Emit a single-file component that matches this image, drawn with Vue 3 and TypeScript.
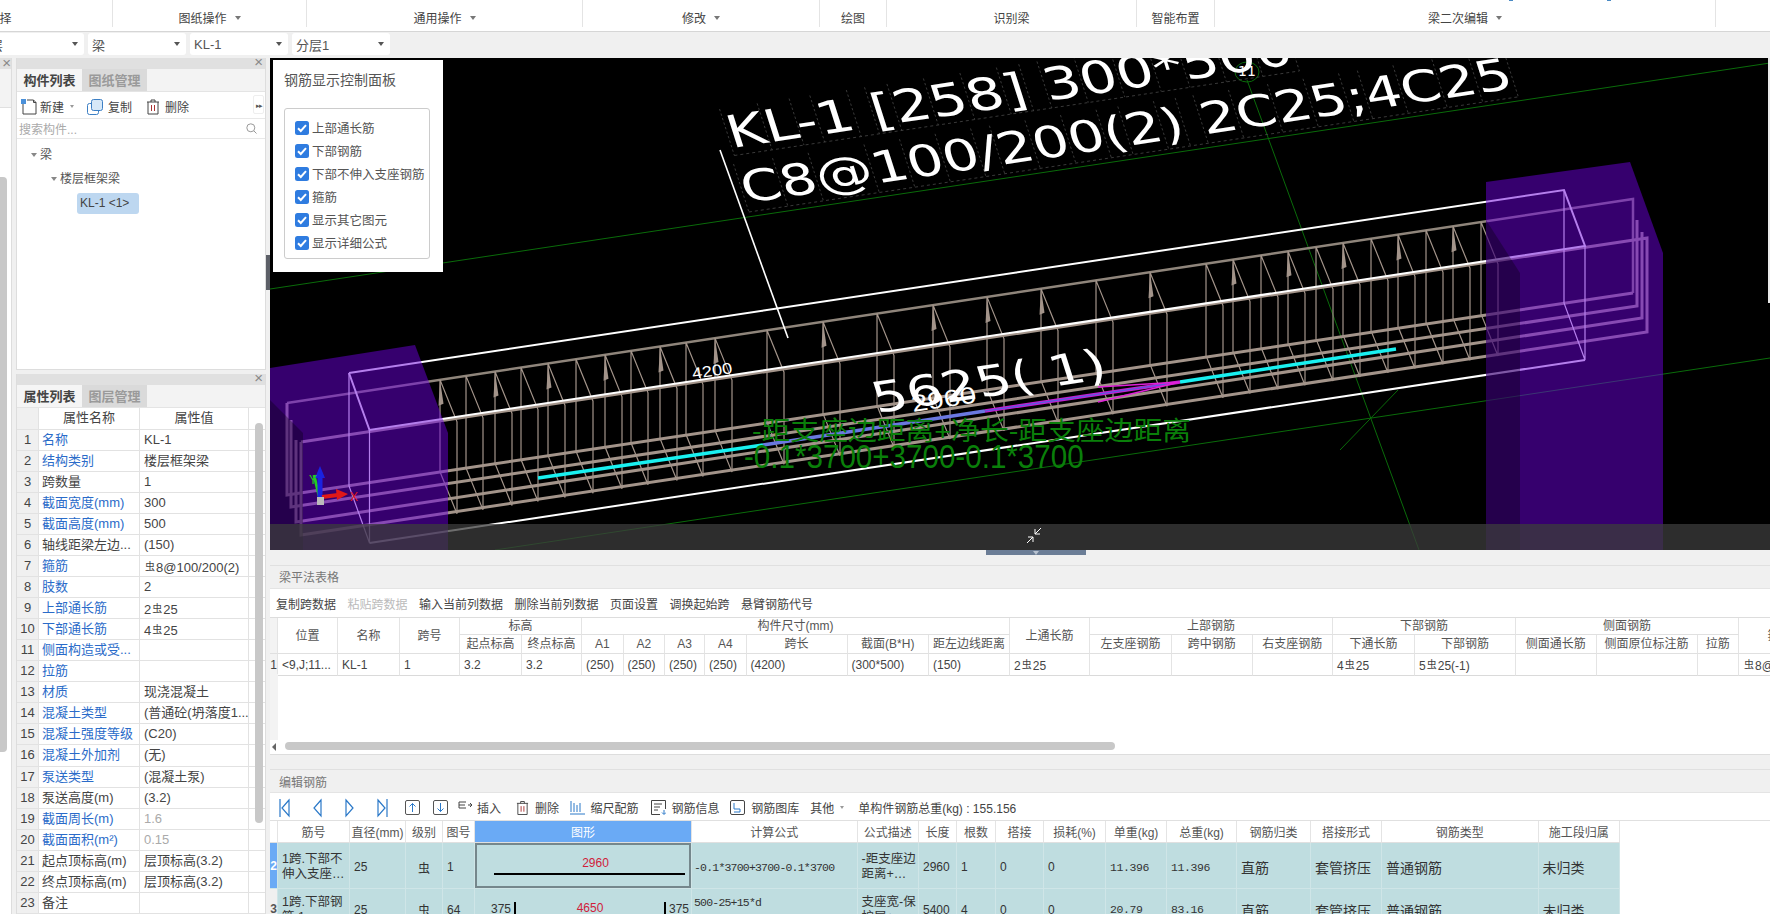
<script setup lang="ts">
const ribbon = [
  { t: '选择', w: 226, a: false, first: true },
  { t: '图纸操作', w: 194, a: true },
  { t: '通用操作', w: 276, a: true },
  { t: '修改', w: 237, a: true },
  { t: '绘图', w: 67, a: false },
  { t: '识别梁', w: 250, a: false },
  { t: '智能布置', w: 78, a: false },
  { t: '梁二次编辑', w: 501, a: true },
  { t: '', w: 54, a: false },
]
const selects = ['层', '梁', 'KL-1', '分层1']
const checks = ['上部通长筋', '下部钢筋', '下部不伸入支座钢筋', '箍筋', '显示其它图元', '显示详细公式']

interface Prop { n: string; v: string; link?: boolean; dim?: boolean; rb?: [string, string] }
const props: Prop[] = [
  { n: '名称', v: 'KL-1', link: true },
  { n: '结构类别', v: '楼层框架梁', link: true },
  { n: '跨数量', v: '1' },
  { n: '截面宽度(mm)', v: '300', link: true },
  { n: '截面高度(mm)', v: '500', link: true },
  { n: '轴线距梁左边...', v: '(150)' },
  { n: '箍筋', v: '', link: true, rb: ['', '8@100/200(2)'] },
  { n: '肢数', v: '2', link: true },
  { n: '上部通长筋', v: '', link: true, rb: ['2', '25'] },
  { n: '下部通长筋', v: '', link: true, rb: ['4', '25'] },
  { n: '侧面构造或受...', v: '', link: true },
  { n: '拉筋', v: '', link: true },
  { n: '材质', v: '现浇混凝土', link: true },
  { n: '混凝土类型', v: '(普通砼(坍落度1...', link: true },
  { n: '混凝土强度等级', v: '(C20)', link: true },
  { n: '混凝土外加剂', v: '(无)', link: true },
  { n: '泵送类型', v: '(混凝土泵)', link: true },
  { n: '泵送高度(m)', v: '(3.2)' },
  { n: '截面周长(m)', v: '1.6', link: true, dim: true },
  { n: '截面面积(m²)', v: '0.15', link: true, dim: true },
  { n: '起点顶标高(m)', v: '层顶标高(3.2)' },
  { n: '终点顶标高(m)', v: '层顶标高(3.2)' },
  { n: '备注', v: '' },
]

const t1Cols = [8, 60, 62, 60, 62, 60, 41.5, 41.5, 40, 41.5, 101, 81.5, 81, 80, 82, 80.5, 80.5, 82, 101, 80.5, 101, 41.5, 82]
const t1Sub = ['起点标高', '终点标高', 'A1', 'A2', 'A3', 'A4', '跨长', '截面(B*H)', '距左边线距离']
const t1Sub2 = ['左支座钢筋', '跨中钢筋', '右支座钢筋', '下通长筋', '下部钢筋', '侧面通长筋', '侧面原位标注筋', '拉筋']
const t1Data = ['<9,J;11...', 'KL-1', '1', '3.2', '3.2', '(250)', '(250)', '(250)', '(250)', '(4200)', '(300*500)', '(150)']
const t1Tools = [
  { t: '复制跨数据' }, { t: '粘贴跨数据', off: true }, { t: '输入当前列数据' }, { t: '删除当前列数据' },
  { t: '页面设置' }, { t: '调换起始跨' }, { t: '悬臂钢筋代号' },
]
const t2Cols = [8, 72, 56, 37, 32, 217, 165.5, 61.5, 38, 39, 48, 62, 61, 70, 74, 71, 156.5, 81.5]
const t2Head = ['', '筋号', '直径(mm)', '级别', '图号', '图形', '计算公式', '公式描述', '长度', '根数', '搭接', '损耗(%)', '单重(kg)', '总重(kg)', '钢筋归类', '搭接形式', '钢筋类型', '施工段归属']

// ---- 3D beam drawing ----
const topY = (x: number) => 403 - 0.1516 * (x - 287)
const stirrupXs: [number, boolean][] = [
  [440, true], [466, false], [495, true], [521, false], [548, true], [576, false], [605, true], [631, false],
  [660, true], [686, false], [715, true], [767, false], [823, true], [877, false], [933, true], [987, true],
  [1041, true], [1096, false], [1150, true], [1206, false], [1233, true], [1261, false], [1288, true],
  [1316, false], [1343, true], [1371, false], [1398, true], [1426, false], [1453, true], [1481, false],
]
const stirrups = stirrupXs.map(([x, thick]) => {
  const y = topY(x)
  return {
    key: x,
    d: `M${x} ${y}L${x + 17} ${y + 42}V${y + 134}L${x} ${y + 92}Z`,
    wedge: thick ? `${x},${y} ${x - 1.5},${y + 26} ${x + 3.5},${y + 24}` : '',
  }
})
const adv: Record<string, number> = {
  K: 0.656, L: 0.557, '-': 0.361, ' ': 0.318, '[': 0.39, ']': 0.39, '*': 0.5, C: 0.698, '@': 1, '/': 0.337,
  '(': 0.39, ')': 0.39, ';': 0.337,
}
function cells(s: string, size: number): number[] {
  const out: number[] = [0]
  let x = 0
  for (const ch of s) {
    x += (adv[ch] ?? 0.636) * size
    out.push(x)
  }
  return out
}
const line1 = 'KL-1 [258] 300*500'
const line2 = 'C8@100/200(2) 2C25;4C25'
const cells1 = cells(line1, 58)
const cells2 = cells(line2, 56.5)
</script>

<template>
  <div class="app">
    <div class="ribbon">
      <div
        v-for="(r, i) in ribbon"
        :key="i"
        class="rcell"
        :class="{ first: r.first }"
        :style="{ width: r.w + 'px' }"
      >
        <span>{{ r.t }}</span>
        <i v-if="r.a" class="tri rib-tri"></i>
      </div>
      <i class="blip b1"></i>
      <i class="blip b2"></i>
    </div>

    <div class="selbar">
      <div v-for="(s, i) in selects" :key="i" class="sel" :class="{ firstsel: i === 0 }">
        <span>{{ s }}</span>
        <i class="tri dark"></i>
      </div>
    </div>

    <div class="main">
      <aside class="left">
        <div class="strip">
          <div class="strip-head"><span class="x">×</span></div>
          <div class="strip-tabs"></div>
          <div class="strip-thumb"></div>
        </div>
        <div class="leftcol">
          <section class="panel p1">
            <div class="phead"><span class="x">×</span></div>
            <div class="tabs">
              <div class="tab on">构件列表</div>
              <div class="tab">图纸管理</div>
            </div>
            <div class="ptool">
              <svg width="16" height="16" viewBox="0 0 16 16" class="ic">
                <path d="M2 4.5V15H15V3.5L12.5 1H6" fill="#fff" stroke="#444" />
                <path d="M12.5 1V3.5H15" fill="none" stroke="#444" />
                <rect x="0" y="0" width="5" height="5" fill="#4a90d9" />
              </svg>
              <span class="tl tl1">新建</span>
              <i class="tri sm"></i>
              <svg width="16" height="16" viewBox="0 0 16 16" class="ic ic2">
                <rect x="0.5" y="4.5" width="11" height="11" rx="2" fill="#fff" stroke="#3c7fc4" />
                <rect x="4.5" y="0.5" width="11" height="11" rx="2" fill="#d6e8f8" stroke="#3c7fc4" />
              </svg>
              <span class="tl">复制</span>
              <svg width="14" height="16" viewBox="0 0 14 16" class="ic ic3">
                <path d="M1 3H13M5 3V1H9V3M2 3V15H12V3" fill="none" stroke="#444" />
                <path d="M5.5 6V12M8.5 6V12" stroke="#a33" />
              </svg>
              <span class="tl">删除</span>
              <span class="more">▸▸</span>
            </div>
            <div class="search">
              <span>搜索构件...</span>
              <svg width="11" height="11" viewBox="0 0 11 11">
                <circle cx="4.8" cy="4.8" r="4" fill="none" stroke="#999" />
                <path d="M7.8 7.8L10.5 10.5" stroke="#999" />
              </svg>
            </div>
            <div class="tree">
              <div class="node n0"><i class="tri gray"></i>梁</div>
              <div class="node n1"><i class="tri gray"></i>楼层框架梁</div>
              <div class="leaf">KL-1 &lt;1&gt;</div>
            </div>
          </section>
          <section class="panel p2">
            <div class="phead short"><span class="x">×</span></div>
            <div class="tabs">
              <div class="tab on">属性列表</div>
              <div class="tab">图层管理</div>
            </div>
            <div class="proptable">
              <div class="prow phdr">
                <div class="pnum"></div>
                <div class="pname center">属性名称</div>
                <div class="pval center">属性值</div>
              </div>
              <div v-for="(p, i) in props" :key="i" class="prow">
                <div class="pnum">{{ i + 1 }}</div>
                <div class="pname" :class="{ link: p.link }">{{ p.n }}</div>
                <div class="pval" :class="{ dim: p.dim }">
                  <template v-if="p.rb">{{ p.rb[0] }}<span class="rb">虫</span>{{ p.rb[1] }}</template>
                  <template v-else>{{ p.v }}</template>
                </div>
              </div>
              <div class="pscroll"></div>
            </div>
          </section>
        </div>
        <div class="lgutter"><i class="ghandle"></i></div>
      </aside>

      <div class="right">
        <div class="view">
          <svg class="scene" width="1500" height="492" viewBox="270 58 1500 492">
            <rect x="270" y="58" width="1500" height="492" fill="#000" />
            <g stroke="#0a6b0a" stroke-width="1" fill="none">
              <path d="M270 289L1770 63" />
              <path d="M495 550L1770 358" />
              <path d="M1247 80L1419 550" />
              <path d="M1398 390L1340 450" />
              <ellipse cx="1247" cy="72" rx="12" ry="10" />
            </g>
            <text x="1238" y="76" class="t11">11</text>

            <!-- rebars on the far side -->
            <g stroke="#8f857b" fill="none">
              <path d="M287 403L1633 199V293" stroke-width="2.5" />
            </g>
            <g stroke="#a3948a" stroke-width="1.2" fill="none">
              <path v-for="s in stirrups" :key="s.key" :d="s.d" />
            </g>
            <g fill="#a3948a">
              <template v-for="s in stirrups" :key="'w' + s.key">
                <polygon v-if="s.wedge" :points="s.wedge" />
              </template>
            </g>
            <g stroke="#a3948a" stroke-width="3" fill="none">
              <path d="M287 403V495L1633 293" />
              <path d="M291 420V507L1637 306V220" />
              <path d="M296 440V522L1642 318V232" />
              <path d="M301 442V535L1647 332V238L301 442" />
            </g>

            <!-- perspective labels -->
            <g transform="matrix(.989,-.148,.24,.75,732,148)">
              <g stroke="#4a4a4a" stroke-width=".8" stroke-dasharray="3 3" fill="none">
                <path v-for="(c, i) in cells1" :key="i" :d="`M${c} -52V10`" />
                <path :d="`M0 10H${cells1[cells1.length - 1]}`" />
              </g>
              <text class="big" x="0" y="0" font-size="58">{{ line1 }}</text>
            </g>
            <g transform="matrix(.989,-.148,.24,.75,746,203)">
              <g stroke="#4a4a4a" stroke-width=".8" stroke-dasharray="3 3" fill="none">
                <path v-for="(c, i) in cells2" :key="i" :d="`M${c} -52V12`" />
                <path :d="`M0 12H${cells2[cells2.length - 1]}`" />
              </g>
              <text class="big" x="0" y="0" font-size="56.5">{{ line2 }}</text>
            </g>
            <path d="M720 150L788 338" stroke="#fff" stroke-width="1.6" />

            <g transform="matrix(.989,-.148,.24,.75,877,413)">
              <text class="big" x="0" y="0" font-size="55">5625( 1)</text>
            </g>
            <text class="small" transform="matrix(1,-.15,.15,.8,913,412)" font-size="29">2960</text>
            <text class="small" transform="matrix(1,-.15,.15,.85,693,379)" font-size="18">4200</text>

            <!-- white box -->
            <g stroke="#fff" fill="none">
              <path d="M349 373L1564 190L1585 246L369.5 430L349 373" stroke-width="2" />
              <path d="M369.5 543L1585 360" stroke-width="2" />
              <path d="M349 373V486L369.5 543V430" stroke-width="1.2" />
              <path d="M1564 190V303L1585 360V246" stroke-width="1.2" />
            </g>

            <!-- main bar -->
            <g fill="none" stroke-width="3.5">
              <path d="M538 478L763 445" stroke="#19f0f0" />
              <path d="M763 445L985 411" stroke="#6a78e0" />
              <path d="M985 411L1180 382" stroke="#c020d0" />
              <path d="M985 411L1180 382" stroke="#5060e0" stroke-width="1.2" />
              <path d="M1180 382L1396 349" stroke="#19f0f0" />
              <path d="M1098 387L1180 382L1098 402" stroke="#e020d8" stroke-width="1.5" />
            </g>

            <!-- formula -->
            <text class="gtext" transform="translate(752,440) scale(1,.92)" font-size="28.8">-距支座边距离+净长-距支座边距离</text>
            <text class="gtext" transform="translate(744,468) scale(1,1.12)" font-size="29.6">-0.1*3700+3700-0.1*3700</text>

            <!-- columns -->
            <g opacity=".5" fill="#6c00dc">
              <path d="M270 368L415 345L448 433V550H270Z" />
              <path d="M1486 182L1630 162L1663 253V550H1486Z" />
            </g>
            <g fill="#000" opacity=".3">
              <path d="M270 400L303 433V550H270Z" />
              <path d="M1486 220L1520 273V550H1486Z" />
            </g>

            <!-- axis gizmo -->
            <g>
              <path d="M320 500L314 475" stroke="#22cc22" stroke-width="3" />
              <path d="M320 500V476" stroke="#1a22e0" stroke-width="5" />
              <polygon points="320,466 315,478 325,478" fill="#1a22e0" />
              <path d="M322 497L338 495" stroke="#e01818" stroke-width="4" />
              <polygon points="348,494 336,489 337,500" fill="#e01818" />
              <rect x="317" y="497" width="7" height="8" fill="#bbb" />
              <text x="350" y="501" class="axis" fill="#e01818">X</text>
              <text x="309" y="484" class="axis" fill="#22cc22">Y</text>
            </g>

            <rect x="270" y="524" width="1500" height="26" fill="rgba(60,60,60,.75)" />
            <g stroke="#fff" stroke-width="1" fill="none">
              <path d="M1041 528L1035 534M1035 529V534H1040" />
              <path d="M1027 543L1033 537M1028 537H1033V542" />
            </g>
          </svg>

          <div class="ctrl">
            <div class="ctitle">钢筋显示控制面板</div>
            <div class="cbox">
              <div v-for="c in checks" :key="c" class="cline">
                <svg class="ck" width="14" height="14" viewBox="0 0 14 14">
                  <rect width="14" height="14" rx="2.5" fill="#2f7ce0" />
                  <path d="M3 7.2L5.8 10L11 4.2" fill="none" stroke="#fff" stroke-width="2" />
                </svg>
                <span>{{ c }}</span>
              </div>
            </div>
          </div>
          <i class="edge"></i>
          <div class="vhandle"><i class="tri white"></i></div>
        </div>

        <div class="split"></div>

        <section class="pane pane1">
          <div class="pane-head">梁平法表格</div>
          <div class="t1tool">
            <span v-for="t in t1Tools" :key="t.t" :class="{ off: t.off }">{{ t.t }}</span>
          </div>
          <div class="t1wrap">
            <table class="grid t1">
              <colgroup>
                <col v-for="(c, i) in t1Cols" :key="i" :style="{ width: c + 'px' }" />
              </colgroup>
              <tr class="h17">
                <th rowspan="2" class="rn"></th>
                <th rowspan="2">位置</th>
                <th rowspan="2">名称</th>
                <th rowspan="2">跨号</th>
                <th colspan="2">标高</th>
                <th colspan="7">构件尺寸(mm)</th>
                <th rowspan="2">上通长筋</th>
                <th colspan="3">上部钢筋</th>
                <th colspan="2">下部钢筋</th>
                <th colspan="3">侧面钢筋</th>
                <th rowspan="2">箍筋</th>
              </tr>
              <tr class="h18">
                <th v-for="s in t1Sub" :key="s">{{ s }}</th>
                <th v-for="s in t1Sub2" :key="'b' + s">{{ s }}</th>
              </tr>
              <tr class="h21">
                <td class="rn num">1</td>
                <td v-for="(d, i) in t1Data" :key="i">{{ d }}</td>
                <td>2<span class="rb">虫</span>25</td>
                <td></td><td></td><td></td>
                <td>4<span class="rb">虫</span>25</td>
                <td>5<span class="rb">虫</span>25(-1)</td>
                <td></td><td></td><td></td>
                <td><span class="rb">虫</span>8@100/200(2)</td>
              </tr>
            </table>
            <div class="t1rail"></div>
          </div>
          <div class="hscroll">
            <i class="harrow"></i>
            <div class="hthumb"></div>
          </div>
        </section>

        <div class="split2"></div>

        <section class="pane pane2">
          <div class="pane-head p2h">编辑钢筋</div>
          <div class="t2tool">
            <svg class="nav" width="11" height="20" viewBox="0 0 11 20"><path d="M1 1V19M10 2L3 10L10 18Z" fill="none" stroke="#2a78c8" stroke-width="1.2" /></svg>
            <svg class="nav n2" width="9" height="20" viewBox="0 0 9 20"><path d="M8 2L1 10L8 18Z" fill="none" stroke="#2a78c8" stroke-width="1.2" /></svg>
            <svg class="nav n2" width="9" height="20" viewBox="0 0 9 20"><path d="M1 2L8 10L1 18Z" fill="none" stroke="#2a78c8" stroke-width="1.2" /></svg>
            <svg class="nav n2" width="11" height="20" viewBox="0 0 11 20"><path d="M10 1V19M1 2L8 10L1 18Z" fill="none" stroke="#2a78c8" stroke-width="1.2" /></svg>
            <svg class="nav n3" width="15" height="15" viewBox="0 0 15 15"><rect x=".5" y=".5" width="14" height="14" rx="1.5" fill="none" stroke="#555" /><path d="M7.5 12V3.5M4.5 6.5L7.5 3.5L10.5 6.5" fill="none" stroke="#2a78c8" /></svg>
            <svg class="nav n4" width="15" height="15" viewBox="0 0 15 15"><rect x=".5" y=".5" width="14" height="14" rx="1.5" fill="none" stroke="#555" /><path d="M7.5 3V11.5M4.5 8.5L7.5 11.5L10.5 8.5" fill="none" stroke="#2a78c8" /></svg>
            <svg class="nav n5" width="15" height="14" viewBox="0 0 15 14"><path d="M8 1H1V7H8M1 4H7M10 4H14M12 2L14 4L12 6" fill="none" stroke="#444" /></svg>
            <span class="tx">插入</span>
            <svg class="nav n6" width="13" height="16" viewBox="0 0 14 16"><path d="M1 3H13M5 3V1H9V3M2 3V15H12V3" fill="none" stroke="#444" /><path d="M5.5 6V12M8.5 6V12" stroke="#a33" /></svg>
            <span class="tx t6">删除</span>
            <svg class="nav n7a" width="15" height="15" viewBox="0 0 15 15"><path d="M1 1V12M4 3V12M7 5V12M10 3V12M0 14H15" fill="none" stroke="#2a78c8" /></svg>
            <span class="tx t6">缩尺配筋</span>
            <svg class="nav n7b" width="15" height="15" viewBox="0 0 15 15"><path d="M.5.5H14.5V9M.5.5V14.5H9M3 4H11M3 7H9M3 10H7" fill="none" stroke="#444" /><path d="M13 10V14M11 12.5L13 14.5L15 12.5" fill="none" stroke="#2a78c8" /></svg>
            <span class="tx t6">钢筋信息</span>
            <svg class="nav n7c" width="15" height="15" viewBox="0 0 15 15"><rect x=".5" y=".5" width="14" height="14" rx="1.5" fill="none" stroke="#444" /><path d="M4 3V9H10V12H4" fill="none" stroke="#2a78c8" /></svg>
            <span class="tx t6">钢筋图库</span>
            <span class="tx t7">其他</span>
            <i class="tri sm t8"></i>
            <span class="tx t9">单构件钢筋总重(kg) : 155.156</span>
          </div>
          <table class="grid t2">
            <colgroup>
              <col v-for="(c, i) in t2Cols" :key="i" :style="{ width: c + 'px' }" />
            </colgroup>
            <tr class="h22">
              <th v-for="(h, i) in t2Head" :key="i" :class="{ hsel: h === '图形' }">{{ h }}</th>
            </tr>
            <tr class="r46">
              <td class="rn2 on">2</td>
              <td class="wrap">1跨.下部不<br />伸入支座…</td>
              <td>25</td>
              <td class="rbc"><span class="rb big-rb">虫</span></td>
              <td>1</td>
              <td class="shape picked">
                <div class="redn">2960</div>
                <div class="blk"></div>
              </td>
              <td class="mono tight">-0.1*3700+3700-0.1*3700</td>
              <td class="wrap">-距支座边<br />距离+…</td>
              <td>2960</td><td>1</td><td>0</td><td>0</td>
              <td class="mono">11.396</td><td class="mono">11.396</td>
              <td class="lg">直筋</td><td class="lg">套管挤压</td><td class="lg">普通钢筋</td><td class="lg">未归类</td>
            </tr>
            <tr class="r40">
              <td class="rn2">3</td>
              <td class="wrap">1跨.下部钢<br />筋.1</td>
              <td>25</td>
              <td class="rbc"><span class="rb big-rb">虫</span></td>
              <td>64</td>
              <td class="shape">
                <div class="bent"><span>375</span><i></i><span class="redn fl">4650</span><i></i><span>375</span></div>
              </td>
              <td class="mono tight wrap">500-25+15*d<br />+4650</td>
              <td class="wrap">支座宽-保<br />护层+…</td>
              <td>5400</td><td>4</td><td>0</td><td>0</td>
              <td class="mono">20.79</td><td class="mono">83.16</td>
              <td class="lg">直筋</td><td class="lg">套管挤压</td><td class="lg">普通钢筋</td><td class="lg">未归类</td>
            </tr>
          </table>
        </section>
      </div>
    </div>
  </div>
</template>

<style>
html, body { margin: 0; padding: 0; background: #f0f0f0; }
</style>

<style scoped>
.app {
  width: 1770px; height: 914px; overflow: hidden; position: relative;
  display: flex; flex-direction: column; background: #f0f0f0;
  font-family: "Liberation Sans", "Noto Sans CJK SC", sans-serif; font-size: 12px; color: #333;
}
.tri { display: inline-block; width: 0; height: 0; border-left: 3.5px solid transparent; border-right: 3.5px solid transparent; border-top: 4px solid #777; }
.tri.dark { border-top-color: #555; border-left-width: 3px; border-right-width: 3px; }
.tri.sm { border-left-width: 2.5px; border-right-width: 2.5px; border-top-width: 3px; border-top-color: #999; }
.tri.gray { border-top-color: #888; border-left-width: 3.5px; border-right-width: 3.5px; margin-right: 3px; vertical-align: 2px; }
.tri.white { border-top-color: #b8c2d0; border-left-width: 3px; border-right-width: 3px; }

.ribbon { height: 32px; flex: none; display: flex; background: #fff; border-bottom: 1px solid #d6d6d6; box-sizing: border-box; position: relative; }
.rcell { flex: none; height: 27px; display: flex; align-items: center; justify-content: center; gap: 8px; border-right: 1px solid #e4e4e4; box-sizing: border-box; font-size: 12px; color: #444; padding-top: 8px; }
.rcell.first { margin-left: -113px; }
.rcell:last-of-type { border-right: none; }
.rib-tri { margin-top: 1px; }
.blip { position: absolute; top: 0; width: 4px; height: 1px; background: #4a8ac4; }
.b1 { left: 1509px; } .b2 { left: 1607px; }

.selbar { height: 26px; flex: none; display: flex; gap: 4px; padding-top: 1px; box-sizing: border-box; }
.sel { width: 98px; height: 22px; background: #fff; border-radius: 3px; flex: none; display: flex; align-items: center; justify-content: space-between; padding: 0 6px 0 4px; box-sizing: border-box; font-size: 13px; color: #555; }
.firstsel { margin-left: -14px; }

.main { flex: 1; display: flex; min-height: 0; }
.left { width: 270px; flex: none; display: flex; }
.strip { width: 12px; flex: none; background: #fff; position: relative; border-right: 1px solid #ddd; box-sizing: border-box; }
.strip-head { height: 11px; background: #e0e0e0; overflow: hidden; position: relative; }
.strip-head .x { right: 0; top: -3px; }
.strip-tabs { height: 22px; background: #f3f3f3; border-bottom: 1px solid #e0e0e0; padding-bottom: 16px; }
.strip-thumb { position: absolute; left: 0; top: 119px; width: 7px; height: 575px; background: #c8c8c8; border-radius: 0 4px 4px 0; }
.leftcol { width: 250px; margin-left: 4px; flex: none; display: flex; flex-direction: column; gap: 4px; }
.panel { background: #fff; border-left: 1px solid #ddd; border-right: 1px solid #ddd; box-sizing: border-box; position: relative; overflow: hidden; }
.p1 { height: 312px; flex: none; border-bottom: 1px solid #ddd; }
.p2 { flex: 1; min-height: 0; }
.phead { height: 11px; background: #e0e0e0; position: relative; }
.x { position: absolute; right: 2px; top: -4px; font-size: 15px; color: #888; line-height: 16px; }
.tabs { height: 23px; display: flex; background: #f3f3f3; border-bottom: 1px solid #e4e4e4; box-sizing: border-box; }
.tab { width: 65px; text-align: center; line-height: 24px; font-size: 13px; font-weight: 700; color: #9a9a9a; background: #dadada; }
.tab.on { background: #f5f5f5; color: #444; }
.ptool { height: 27px; display: flex; align-items: center; padding: 3px 0 0 4px; border-bottom: 1px solid #e8e8e8; box-sizing: border-box; position: relative; }
.ic { flex: none; }
.tl { font-size: 12px; color: #444; margin-left: 5px; }
.tl1 { margin-left: 3px; }
.ptool .tri.sm { margin-left: 6px; }
.ic2 { margin-left: 13px; }
.ic3 { margin-left: 14px; }
.more { position: absolute; right: 1px; top: 3px; width: 11px; height: 19px; line-height: 19px; text-align: center; font-size: 7px; color: #555; background: #fff; border: 1px solid #eee; border-radius: 2px; box-sizing: border-box; letter-spacing: -1px; }
.search { height: 19px; display: flex; align-items: center; justify-content: space-between; padding: 0 8px 0 2px; color: #aaa; border-bottom: 1px solid #e8e8e8; font-size: 12px; }
.tree { padding-top: 4px; font-size: 12px; color: #555; }
.node { height: 24px; line-height: 24px; }
.n0 { padding-left: 14px; }
.n1 { padding-left: 34px; }
.leaf { margin: 2px 0 0 60px; width: 62px; height: 21px; line-height: 21px; background: #bdd7f0; border-radius: 3px; padding-left: 3px; box-sizing: border-box; color: #444; }

.proptable { position: relative; font-size: 13px; color: #444; }
.prow { display: flex; height: 21.07px; line-height: 20px; border-bottom: 1px solid #e2e2e2; box-sizing: border-box; }
.phdr { height: 21.5px; }
.pnum { width: 22px; flex: none; background: #f0f0f0; text-align: center; border-right: 1px solid #e2e2e2; box-sizing: border-box; }
.pname { width: 101px; flex: none; padding-left: 3px; box-sizing: border-box; border-right: 1px solid #e2e2e2; white-space: nowrap; overflow: hidden; }
.pval { width: 109px; flex: none; padding-left: 4px; box-sizing: border-box; border-right: 1px solid #e2e2e2; white-space: nowrap; overflow: hidden; }
.center { text-align: center; padding-left: 0; }
.link { color: #2a6bc9; }
.dim { color: #aaa; }
.rb { font-size: 10px; vertical-align: 2px; margin: 0 1px; font-family: "Noto Sans CJK SC", sans-serif; }
.pscroll { position: absolute; left: 238px; top: 15px; width: 8px; height: 400px; background: #c8c8c8; border-radius: 4px; }
.lgutter { width: 4px; flex: none; position: relative; }
.ghandle { position: absolute; left: 0; top: 197px; width: 4px; height: 35px; background: #5d6068; }

.right { width: 1500px; flex: none; display: flex; flex-direction: column; min-height: 0; }
.view { height: 492px; flex: none; position: relative; background: #000; }
.scene { display: block; }
.edge { position: absolute; right: 0; top: 0; width: 2px; height: 245px; background: #e8e8e8; }
.ctrl { position: absolute; left: 3px; top: 2px; width: 170px; height: 212px; background: #fff; padding: 11px 11px 0; box-sizing: border-box; }
.ctitle { font-size: 14px; line-height: 18px; color: #555; }
.cbox { margin-top: 19px; width: 146px; height: 151px; border: 1px solid #ccc; border-radius: 3px; box-sizing: border-box; padding: 7px 0 0 10px; }
.cline { display: flex; align-items: center; height: 23px; font-size: 12.5px; color: #555; white-space: nowrap; }
.ck { flex: none; margin-right: 3px; }
.vhandle { position: absolute; left: 716px; top: 492px; width: 100px; height: 5px; background: #6b7d96; display: flex; justify-content: center; align-items: center; z-index: 2; }

.split { height: 16px; flex: none; background: #f0f0f0; border-bottom: 1px solid #e0e0e0; box-sizing: border-box; }
.pane { background: #fff; overflow: hidden; position: relative; }
.pane1 { height: 189px; flex: none; border-bottom: 1px solid #ddd; box-sizing: border-box; display: flex; flex-direction: column; }
.pane-head { height: 23px; flex: none; line-height: 24px; padding-left: 9px; background: #f0f0f0; border-bottom: 1px solid #e4e4e4; color: #777; font-size: 12px; box-sizing: border-box; }
.p2h { line-height: 26px; }
.t1tool { height: 28px; flex: none; display: flex; align-items: center; gap: 11.5px; padding-left: 6px; font-size: 12px; color: #444; }
.off { color: #bbb; }
.t1wrap { flex: 1; position: relative; overflow: hidden; min-height: 0; }
.t1rail { position: absolute; left: 0; top: 57px; bottom: 0; width: 8px; background: #f3f3f3; }
.grid { table-layout: fixed; border-collapse: separate; border-spacing: 0; font-size: 12px; color: #444; }
.t1 { width: 1551px; border-top: 1px solid #ddd; }
.grid th { font-weight: 400; color: #555; border-right: 1px solid #e4e4e4; border-bottom: 1px solid #e0e0e0; background: #fff; padding: 0; white-space: nowrap; overflow: hidden; box-sizing: border-box; }
.grid td { border-right: 1px solid #e4e4e4; border-bottom: 1px solid #dadada; padding: 0 0 0 4px; white-space: nowrap; overflow: hidden; box-sizing: border-box; }
.h17 th { height: 17px; line-height: 16px; }
.h18 th { height: 18px; line-height: 18px; }
.h21 td { height: 22px; }
.t1 .rn { background: #f3f3f3; }
.t1 .num { padding: 0; text-align: center; }
.hscroll { height: 14px; flex: none; position: relative; background: #fff; }
.harrow { position: absolute; left: 2px; top: 3px; border-top: 4px solid transparent; border-bottom: 4px solid transparent; border-right: 4px solid #666; }
.hthumb { position: absolute; left: 15px; top: 2px; width: 830px; height: 8px; background: #c8c8c8; border-radius: 4px; }

.split2 { height: 15px; flex: none; background: #f0f0f0; border-bottom: 1px solid #e0e0e0; box-sizing: border-box; }
.pane2 { flex: 1; min-height: 0; }
.t2tool { height: 28px; display: flex; align-items: center; padding: 2px 0 0 9px; font-size: 12px; color: #444; border-bottom: 1px solid #e0e0e0; box-sizing: border-box; }
.nav { flex: none; }
.n2 { margin-left: 23px; }
.n3 { margin-left: 17px; }
.n4 { margin-left: 13px; }
.n5 { margin-left: 10px; }
.tx { margin-left: 4px; white-space: nowrap; }
.n6 { margin-left: 15px; }
.t6 { margin-left: 6px; }
.n7a { margin-left: 10.5px; }
.n7b { margin-left: 12px; }
.n7c { margin-left: 10.6px; }
.t7 { margin-left: 11px; }
.t8 { margin-left: 6px; }
.t9 { margin-left: 14px; }
.t2 { width: 1350px; }
.h22 th { height: 22px; }
.t2 th.hsel { background: #6aaaf5; color: #fff; }
.r46 td, .r40 td { background: #bfdde0; border-right-color: #cfe5e7; border-bottom-color: #cfe5e7; color: #333; }
.r46 td { height: 46px; padding-top: 3px; }
.r40 td { height: 40px; padding-top: 2px; }
.t2 td.rn2 { padding: 0; text-align: center; background: #f0f0f0; color: #555; font-weight: 700; }
.t2 td.rn2.on { background: #6aaaf5; color: #fff; }
.wrap { line-height: 15px; font-size: 12.5px; }
.rbc { text-align: center; padding-left: 0 !important; }
.big-rb { font-size: 12px; vertical-align: 0; }
.mono { font-family: "Liberation Mono", monospace; font-size: 11.5px; letter-spacing: -.4px; }
.t2 td.tight { letter-spacing: -.8px; padding-left: 2px; }
.lg { font-size: 14px; }
.t2 td.shape { padding: 0; text-align: center; }
.picked { box-shadow: inset 0 0 0 2px #75878c; position: relative; }
.redn { color: #d0203a; font-size: 12px; line-height: 15px; padding-left: 25px; }
.blk { height: 2px; background: #000; margin: 2px 6px 0 19px; }
.bent { display: flex; align-items: center; padding: 0 2px 0 16px; gap: 3px; }
.bent i { width: 2px; height: 13px; background: #000; flex: none; }
.bent .fl { flex: 1; padding-left: 0; }
.t11 { font: 14px "DejaVu Sans", sans-serif; fill: #fff; }
.big { font-family: "DejaVu Sans", sans-serif; fill: #fff; }
.small { font-family: "Liberation Sans", sans-serif; fill: #fff; }
.gtext { font-family: "Liberation Sans", "Noto Sans CJK SC", sans-serif; fill: #0a7f0a; }
.axis { font: 12px "Liberation Sans", sans-serif; }
</style>
